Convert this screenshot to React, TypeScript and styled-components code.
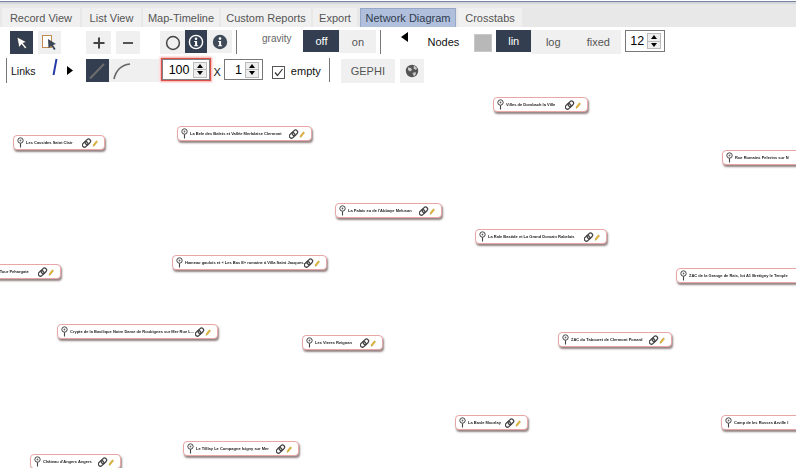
import React from "react";
import styled, { createGlobalStyle } from "styled-components";

const Global = createGlobalStyle`
  html, body { margin: 0; padding: 0; background: #fff; overflow: hidden; }
  #root { width: 796px; height: 468px; }
  * { box-sizing: border-box; }
`;

const Page = styled.div`
  width: 796px; height: 468px; display: flex; flex-direction: column; overflow: hidden;
  font-family: "Liberation Sans", Arial, sans-serif; background: #fff;
`;
const TopRule = styled.div`
  height: 3px; margin-top: 1px; flex: none; background: #7484a0; border-bottom: 2px solid #d4d6da;
`;
const TabBar = styled.div`
  height: 23px; flex: none; background: #e8e8e8; display: flex; align-items: flex-end; padding-left: 2px; gap: 2px;
`;
const Tab = styled.div<{ $w: number; $ml?: number; $active?: boolean }>`
  width: ${p => p.$w}px; height: 19px; margin-left: ${p => p.$ml ?? 0}px; display: flex; align-items: center; justify-content: center;
  font-size: 11px; color: ${p => (p.$active ? "#2f3b4e" : "#555")};
  background: ${p => (p.$active ? "#b0c0dc" : "#f0f0f0")};
  border: ${p => (p.$active ? "1px solid #96a8c8" : "none")}; border-bottom: none;
`;
const Row = styled.div<{ $h: number; $top: number }>`
  height: ${p => p.$h}px; margin-top: ${p => p.$top}px; flex: none; display: flex; align-items: flex-start;
`;
const Btn = styled.div<{ $w: number; $h?: number; $on?: boolean; $ml?: number; $mt?: number; $start?: boolean }>`
  width: ${p => p.$w}px; height: ${p => p.$h ?? 23}px; flex: none;
  margin-left: ${p => p.$ml ?? 0}px; margin-top: ${p => p.$mt ?? 0}px;
  display: flex; align-items: center; justify-content: ${p => (p.$start ? "flex-start" : "center")};
  padding-left: ${p => (p.$start ? 3 : 0)}px;
  background: ${p => (p.$on ? "#333f50" : "#f0f0f0")};
  color: ${p => (p.$on ? "#fff" : "#555")};
  font-size: 11px;
`;
const Sep = styled.div<{ $ml: number; $h?: number }>`
  width: 1px; height: ${p => p.$h ?? 24}px; background: #777; flex: none; margin-left: ${p => p.$ml}px;
`;
const Label = styled.span<{ $ml: number; $mt: number; $size?: number; $color?: string }>`
  flex: none; margin-left: ${p => p.$ml}px; margin-top: ${p => p.$mt}px;
  font-size: ${p => p.$size ?? 11}px; color: ${p => p.$color ?? "#111"}; line-height: 14px;
`;
const Swatch = styled.div`
  width: 18px; height: 18px; margin-left: 15px; margin-top: 4px; flex: none; background: #b8b8b8; border: 1px solid #c8c8c8;
`;
const Glyph = styled.svg<{ $ml: number; $mt: number }>`
  flex: none; margin-left: ${p => p.$ml}px; margin-top: ${p => p.$mt}px; display: block;
`;
const Spin = styled.div<{ $w: number; $h: number; $ml: number; $mt?: number; $focus?: boolean }>`
  width: ${p => p.$w}px; height: ${p => p.$h}px; flex: none; margin-left: ${p => p.$ml}px; margin-top: ${p => p.$mt ?? 0}px;
  border: ${p => (p.$focus ? "1px solid #dc4f4a" : "1px solid #777")};
  box-shadow: ${p => (p.$focus ? "0 0 2px 1px #f6a8a4, inset 0 0 0 1px #808080" : "none")};
  display: flex; align-items: center; justify-content: flex-end; gap: 3px; padding: 0 3px;
  font-size: 12.5px; color: #000; background: #fff;
`;
const Stepper = styled.div`
  width: 14px; height: 16px; flex: none; display: flex; flex-direction: column; gap: 1px; background: #bbb; border: 1px solid #bbb;
`;
const Step = styled.div<{ $up?: boolean }>`
  flex: 1; background: #eee; display: flex; align-items: center; justify-content: center;
  &::after {
    content: ""; width: 0; height: 0; border-left: 3px solid transparent; border-right: 3px solid transparent;
    ${p => (p.$up ? "border-bottom: 4px solid #000;" : "border-top: 4px solid #000;")}
  }
`;
const Check = styled.div`
  width: 13px; height: 13px; margin-left: 9px; margin-top: 8px; flex: none; border: 1px solid #555; background: #fff;
  display: flex; align-items: center; justify-content: center;
`;
const Canvas = styled.div`
  position: relative; flex: 1; overflow: hidden; background: #fff;
`;
const Node = styled.div.attrs<{ $x: number; $y: number; $w: number }>(p => ({
  style: { left: p.$x, top: p.$y, width: p.$w },
}))<{ $x: number; $y: number; $w: number }>`
  position: absolute; height: 15px; background: #fff; border: 1px solid #e9a6a6; border-radius: 4px;
  box-shadow: 1px 2px 2px rgba(60, 30, 30, 0.55);
  display: flex; align-items: center; padding: 0 6px 0 3px; gap: 2px; overflow: hidden;
`;
const NodeText = styled.span`
  flex: 1; min-width: 0; white-space: nowrap; font-size: 4px; font-weight: 700; color: #222;
  line-height: 13px; filter: blur(0.25px);
`;

const Pin = () => (
  <svg width="7" height="11" viewBox="0 0 7 11" style={{ flex: "none" }}>
    <circle cx="3.5" cy="3.5" r="2.7" fill="#fff" stroke="#444" strokeWidth="1" />
    <circle cx="3.5" cy="3.5" r="0.9" fill="#666" />
    <path d="M3.5 6.2V10.500" stroke="#444" strokeWidth="1.1" />
  </svg>
);
const NodeTools = () => (
  <svg width="16" height="10" viewBox="0 0 16 10" style={{ flex: "none" }}>
    <g fill="none" stroke="#444" strokeWidth="1.3">
      <rect x="3.8" y="0.8" width="4.200" height="6" rx="2" transform="rotate(45 5.900 3.800)" />
      <rect x="1" y="3.400" width="4.200" height="6" rx="2" transform="rotate(45 3.100 6.400)" />
    </g>
    <path d="M11 8.500l.6-2.200 2.800-3.500 1.200 1-2.800 3.500z" fill="#e8b830" stroke="#a88420" strokeWidth="0.4" />
  </svg>
);

const nodes = [
  { x: 13, y: 135, w: 92, t: "Les Cassides  Saint Clair", tools: true },
  { x: 177, y: 126, w: 135, t: "La Bele des Balets et Vallée Merlalaise  Clermont", tools: true },
  { x: 493, y: 97, w: 95, t: "Villes de  Dombach la Ville", tools: true },
  { x: 722, y: 150, w: 90, t: "Rue Romains  Pelerins sur N", tools: false },
  { x: 335, y: 203, w: 107, t: "La Palais  eu de l'Abbaye  Melusan", tools: true },
  { x: 475, y: 229, w: 132, t: "La Rale Bastide et La Grand Domain  Rabelais", tools: true },
  { x: 676, y: 268, w: 130, t: "ZAC de la Grange de Rais, lot A1  Bretigny le Temple", tools: false },
  { x: -60, y: 264, w: 121, t: "Site de la Chapelle de la Tour  Pehargate", tools: true },
  { x: 172, y: 255, w: 155, t: "Hameau gaulois et « Les Bas E» romaine à Villa Saint Jacques...", tools: true },
  { x: 57, y: 324, w: 161, t: "Crypte de la Basilique Notre Dame de Roubignes sur Mer  Rue L...", tools: true },
  { x: 302, y: 335, w: 81, t: "Les Vieres  Reignan", tools: true },
  { x: 558, y: 332, w: 114, t: "ZAC du Tabouret de Clermont  Ponard", tools: true },
  { x: 455, y: 415, w: 73, t: "La Basle  Mourlay", tools: true },
  { x: 721, y: 415, w: 90, t: "Camp de les Rosses  Arville l", tools: false },
  { x: 183, y: 441, w: 116, t: "Le Tilllay  Le Compagne Isigny sur Mer", tools: true },
  { x: 30, y: 454, w: 91, t: "Château d'Angers  Angers", tools: true },
];
const canvasTop = 83;

const App = () => (
  <Page>
    <Global />
    <TopRule />
    <TabBar>
      <Tab $w={78}>Record View</Tab>
      <Tab $w={59}>List View</Tab>
      <Tab $w={76}>Map-Timeline</Tab>
      <Tab $w={90}>Custom Reports</Tab>
      <Tab $w={44}>Export</Tab>
      <Tab $w={96} $ml={1} $active>Network Diagram</Tab>
      <Tab $w={64}>Crosstabs</Tab>
    </TabBar>
    <Row $h={24} $top={3}>
      <Btn $w={23} $ml={10} $mt={1} $on>
        <svg width="14" height="14" viewBox="0 0 14 14"><path d="M2 1l9.500 5-3.400 1.200 3.600 4.200-1.600 1.400-3.500-4.300L4 11.500z" fill="#fff" stroke="#222" strokeWidth=".6" /></svg>
      </Btn>
      <Btn $w={23} $ml={5} $mt={1}>
        <svg width="18" height="18" viewBox="0 0 18 18">
          <rect x="1.500" y="1.500" width="9" height="12" fill="#fff" stroke="#c08a50" strokeWidth="1" />
          <path d="M7 5l8 5-3 1 2.600 4-1.600 1-2.500-4-3 2z" fill="#3a4656" />
        </svg>
      </Btn>
      <Btn $w={25} $ml={25} $mt={1}>
        <svg width="14" height="14" viewBox="0 0 14 14"><path d="M7 1.500v11M1.500 7h11" stroke="#444" strokeWidth="2" /></svg>
      </Btn>
      <Btn $w={24} $ml={5} $mt={1}>
        <svg width="14" height="14" viewBox="0 0 14 14"><path d="M2 7h10" stroke="#555" strokeWidth="2" /></svg>
      </Btn>
      <Btn $w={25} $ml={20} $mt={1}>
        <svg width="16" height="16" viewBox="0 0 16 16"><circle cx="8" cy="8" r="6.400" fill="none" stroke="#444" strokeWidth="1.500" /></svg>
      </Btn>
      <Btn $w={22} $on>
        <svg width="16" height="16" viewBox="0 0 16 16">
          <circle cx="8" cy="8" r="6.600" fill="none" stroke="#fff" strokeWidth="1.400" />
          <circle cx="8" cy="4.700" r="1.300" fill="#fff" />
          <path d="M6.200 7h2.900v4.200h1v1H6.100v-1h1V8H6.200z" fill="#fff" />
        </svg>
      </Btn>
      <Btn $w={25}>
        <svg width="16" height="16" viewBox="0 0 16 16">
          <circle cx="8" cy="8" r="7.200" fill="#404b5a" />
          <circle cx="8" cy="4.600" r="1.300" fill="#fff" />
          <path d="M6.200 7h2.900v4.200h1v1H6.100v-1h1V8H6.200z" fill="#fff" />
        </svg>
      </Btn>
      <Sep $ml={4} />
      <Label $ml={25} $mt={2} $size={10} $color="#666">gravity</Label>
      <Btn $w={36} $h={22} $ml={12} $on>off</Btn>
      <Btn $w={37}>on</Btn>
      <Sep $ml={4} />
      <Glyph $ml={20} $mt={2} width="7" height="10" viewBox="0 0 7 10"><path d="M7 0v10L0 5z" fill="#000" /></Glyph>
      <Label $ml={19} $mt={5}>Nodes</Label>
      <Swatch />
      <Btn $w={35} $h={22} $ml={4} $on>lin</Btn>
      <Btn $w={44} $h={24}>log</Btn>
      <Btn $w={46} $h={24}>fixed</Btn>
      <Spin $w={40} $h={22} $ml={4}>12<Stepper><Step $up /><Step /></Stepper></Spin>
    </Row>
    <Row $h={25} $top={4}>
      <Sep $ml={6} $h={25} />
      <Label $ml={4} $mt={6} $size={10.5}>Links</Label>
      <Glyph $ml={16} $mt={0} width="6" height="18" viewBox="0 0 6 18"><path d="M4.500 1L1.500 17" stroke="#2438a8" strokeWidth="2" /></Glyph>
      <Glyph $ml={9} $mt={8} width="6" height="9" viewBox="0 0 6 9"><path d="M0 0v9l6-4.500z" fill="#000" /></Glyph>
      <Btn $w={23} $ml={13} $mt={1} $on>
        <svg width="20" height="20" viewBox="0 0 20 20"><path d="M3 17.500L17 3" stroke="#6e6e6e" strokeWidth="2" /></svg>
      </Btn>
      <Btn $w={50} $mt={1} $start>
        <svg width="20" height="20" viewBox="0 0 20 20"><path d="M2 18C4 9 10 4 18 3" fill="none" stroke="#666" strokeWidth="1.600" /></svg>
      </Btn>
      <Spin $w={50} $h={23} $ml={2} $focus>100<Stepper><Step $up /><Step /></Stepper></Spin>
      <Label $ml={3} $mt={7}>X</Label>
      <Spin $w={39} $h={21} $ml={3} $mt={1}>1<Stepper><Step $up /><Step /></Stepper></Spin>
      <Check>
        <svg width="11" height="11" viewBox="0 0 11 11"><path d="M2 5.500l2.500 3L9.500 2" fill="none" stroke="#333" strokeWidth="1.200" /></svg>
      </Check>
      <Label $ml={6} $mt={6}>empty</Label>
      <Sep $ml={8} $h={24} />
      <Btn $w={54} $h={24} $ml={11} $mt={1}>GEPHI</Btn>
      <Btn $w={24} $h={24} $ml={5} $mt={1}>
        <svg width="14" height="14" viewBox="0 0 14 14">
          <circle cx="7" cy="7" r="6.200" fill="#555" />
          <path d="M3 3.500l3 .5 1 2-2 1.500-2-1.500zM9 1.500l3 2.500-1 2-2.500-1.500zM7.500 9l3-1 .5 2-2 2.500z" fill="#c8c8c8" />
        </svg>
      </Btn>
    </Row>
    <Canvas>
      {nodes.map(n => (
        <Node key={n.t} $x={n.x} $y={n.y - canvasTop} $w={n.w}>
          <Pin />
          <NodeText>{n.t}</NodeText>
          {n.tools && <NodeTools />}
        </Node>
      ))}
    </Canvas>
  </Page>
);

export default App;
